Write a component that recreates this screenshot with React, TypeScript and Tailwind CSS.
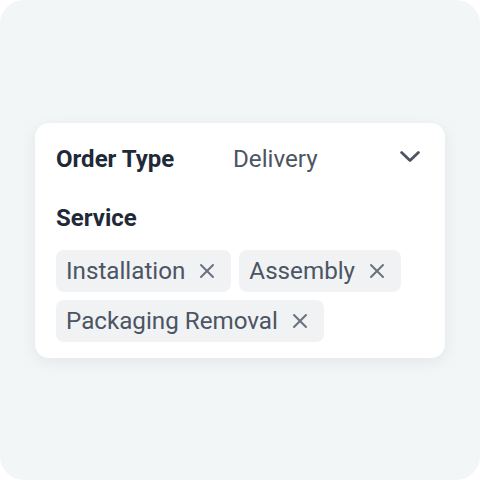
import { X } from "lucide-react"

const services = ["Installation", "Assembly", "Packaging Removal"]

function Chip({ label }: { label: string }) {
  return (
    <div className="flex items-center gap-2.5 rounded-lg bg-[#f1f2f4] py-[5px] pl-[10px] pr-3">
      <span className="text-[24.2px] leading-8 text-[#4b5563]">{label}</span>
      <X size={24} strokeWidth={2} className="text-[#6b7280]" />
    </div>
  )
}

export default function App() {
  return (
    <div className="flex h-[480px] w-[480px] items-center justify-center rounded-3xl bg-[#f3f6f7] font-['Roboto',sans-serif]">
      <div className="w-[410px] rounded-[14px] bg-white pb-[16px] pl-[21px] pr-[25px] pt-[20px] shadow-[0_4px_16px_rgba(15,23,42,0.07)]">
        <div className="flex items-center">
          <span className="w-[177px] text-[24px] font-bold leading-8 text-[#1f2937]">Order Type</span>
          <span className="flex-1 text-[24.2px] leading-8 text-[#4b5563]">Delivery</span>
          <svg width="20" height="12" viewBox="0 0 20 12" fill="none" className="mb-1 text-[#4b5563]">
            <path d="M1.6 1.6 10 9.6l8.4-8" stroke="currentColor" strokeWidth="2.8" strokeLinecap="round" strokeLinejoin="round" />
          </svg>
        </div>

        <div className="mt-[27px] text-[24px] font-bold leading-8 text-[#1f2937]">Service</div>

        <div className="mt-4 flex flex-wrap gap-2">
          {services.map((s) => (
            <Chip key={s} label={s} />
          ))}
        </div>
      </div>
    </div>
  )
}
